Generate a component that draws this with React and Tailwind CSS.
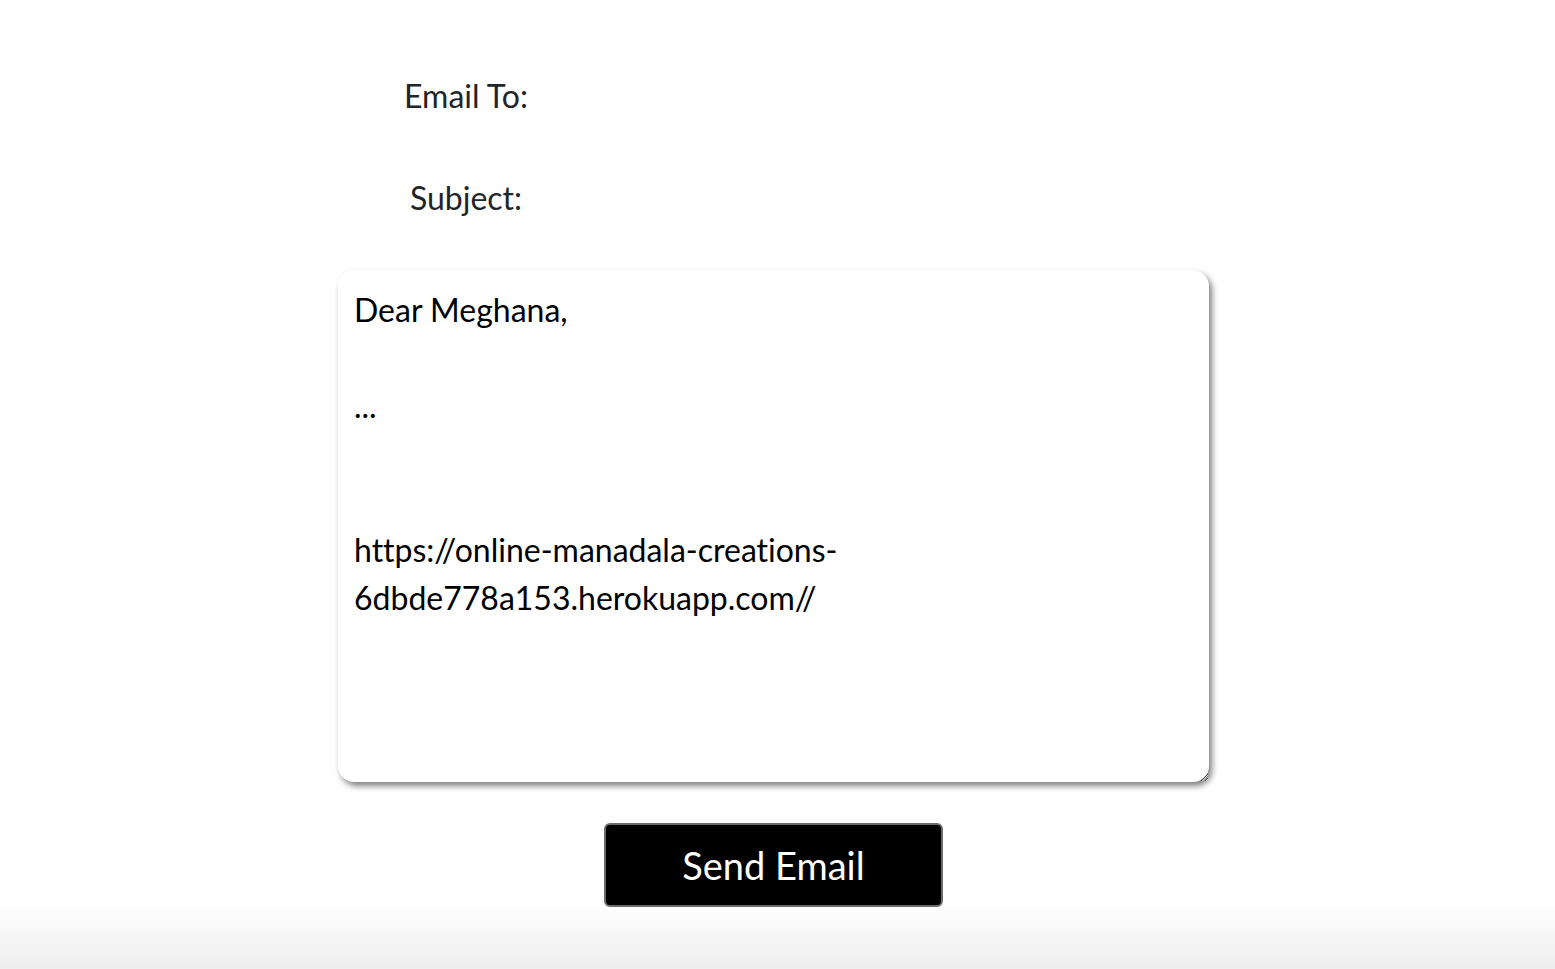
export default function App() {
    return (
        <div
            className="h-[969px] w-full overflow-hidden bg-[linear-gradient(to_bottom,#ffffff_0%,#ffffff_93%,#eeeeee_100%)] [font-variant-ligatures:none]"
            style={{ fontFamily: "Lato, 'Open Sans', sans-serif" }}
        >
            <div className="w-[871px] ml-[338px] pt-[72px]">
                <div className="flex items-center h-[48px]">
                    <label className="w-[256px] text-center text-[32px] text-[#212529]">
                        Email To:
                    </label>
                    <input className="flex-1 h-[48px] outline-none bg-transparent" />
                </div>
                <div className="flex items-center h-[48px] mt-[54px]">
                    <label className="w-[256px] text-center text-[32px] text-[#212529]">
                        Subject:
                    </label>
                    <input className="flex-1 h-[48px] outline-none bg-transparent" />
                </div>
                <textarea
                    className="block mt-[48px] w-[871px] h-[512px] rounded-[16px] px-4 py-[16px] text-[32px] leading-[48px] text-black bg-white outline-none shadow-[3px_4px_6px_rgba(0,0,0,0.5)] [font-variant-ligatures:none]"
                    style={{ fontFamily: "Lato, 'Open Sans', sans-serif" }}
                    defaultValue={
                        "Dear Meghana,\n\n...\n\n\nhttps://online-manadala-creations-\n6dbde778a153.herokuapp.com//"
                    }
                />
                <div className="flex justify-center mt-[41px]">
                    <button className="w-[339px] h-[84px] bg-black text-white text-[38px] rounded-[6px] border-2 border-[#6b6b6b]">
                        Send Email
                    </button>
                </div>
            </div>
        </div>
    );
}
